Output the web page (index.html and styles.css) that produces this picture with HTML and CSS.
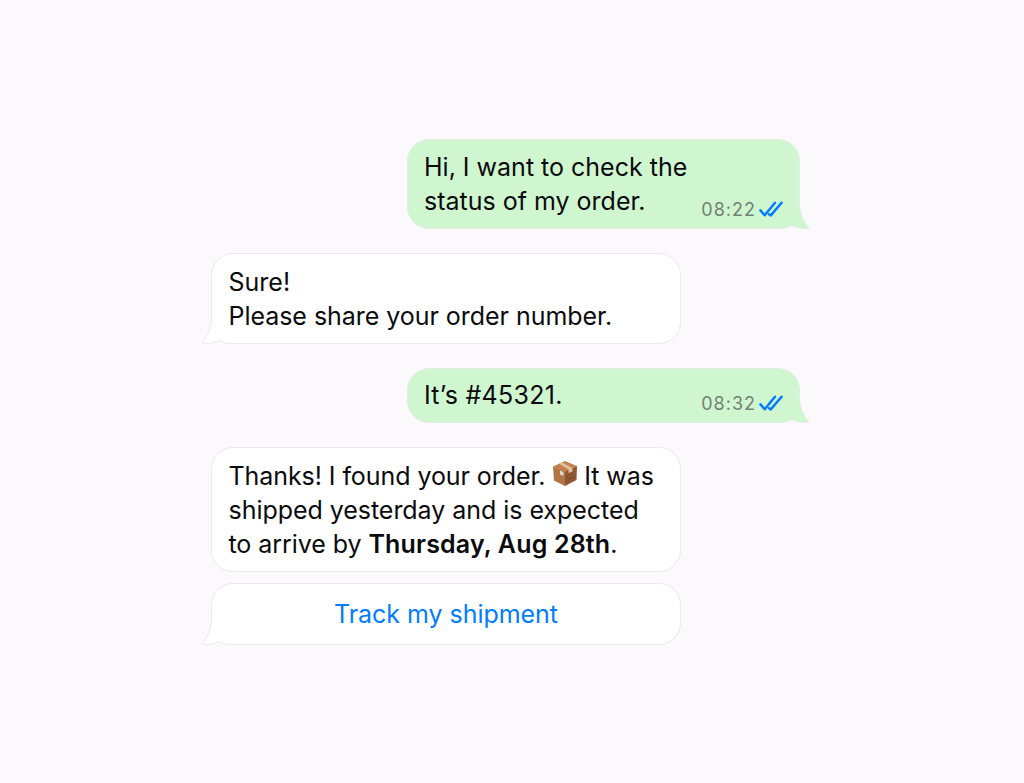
FILE: index.html
```
<!DOCTYPE html>
<html lang="en">
<head>
<meta charset="utf-8">
<title>Order chat</title>
<link rel="stylesheet" href="styles.css">
</head>
<body>
<main class="chat">
  <article class="bubble sent tall">
    <svg class="tail" viewBox="0 0 42 36"><path class="fill" d="M0 0H31.500V10C32 19 35 27 41 34C35 35 29 34 24 31.500C19 34.500 14 34.500 8 34.500H0Z"/><path class="edge" d="M31.500 0V10C32 19 35 27 41 34C35 35 29 34 24 31.500C19 34.500 14 34.500 8 34.500H0"/></svg>
    <p class="text"><span class="line">Hi, I want to check the</span><span class="line">status of my order.</span></p>
    <div class="meta"><time>08:22</time><svg class="ticks" viewBox="0 0 24 18"><path d="M1.400 9.400 5.700 14.300 16 1.700M10 13.200 11.800 14.400 22.600 1.700"/></svg></div>
  </article>
  <article class="bubble received">
    <svg class="tail" viewBox="0 0 42 36"><path class="fill" d="M0 0H31.500V10C32 19 35 27 41 34C35 35 29 34 24 31.500C19 34.500 14 34.500 8 34.500H0Z"/><path class="edge" d="M31.500 0V10C32 19 35 27 41 34C35 35 29 34 24 31.500C19 34.500 14 34.500 8 34.500H0"/></svg>
    <p class="text"><span class="line">Sure!</span><span class="line reply">Please share your order number.</span></p>
  </article>
  <article class="bubble sent short">
    <svg class="tail" viewBox="0 0 42 36"><path class="fill" d="M0 0H31.500V10C32 19 35 27 41 34C35 35 29 34 24 31.500C19 34.500 14 34.500 8 34.500H0Z"/><path class="edge" d="M31.500 0V10C32 19 35 27 41 34C35 35 29 34 24 31.500C19 34.500 14 34.500 8 34.500H0"/></svg>
    <p class="text"><span class="line number">It’s #45321.</span></p>
    <div class="meta"><time>08:32</time><svg class="ticks" viewBox="0 0 24 18"><path d="M1.400 9.400 5.700 14.300 16 1.700M10 13.200 11.800 14.400 22.600 1.700"/></svg></div>
  </article>
  <article class="bubble received details">
    <p class="text"><span class="line found">Thanks! I found your order. <svg class="parcel" viewBox="0 0 26 27" role="img" aria-label="package"><path fill="#c08350" d="M1 6.500 13 1 25 6 13 12Z"/><path fill="#b17443" d="M1 6.500 13 11.500V26L2 20.500Z"/><path fill="#8f5832" d="M13 11.500 25 6 24.500 20 13 26Z"/><path fill="#e2c09d" d="M7 3.800 10 2.400 20.500 8V11.600L16.500 13V9.500Z"/><path fill="#d9d8d7" d="m8 10.500 3.500 1.400v4L8 14.500Z"/><path fill="#6b4026" d="m17.500 18.300 1.500-.7v1.500l-1.500.7zM20.500 17l1.500-.7v1.500l-1.500.7z"/></svg> It was</span><span class="line shipped">shipped yesterday and is expected</span><span class="line arrive">to arrive by <strong>Thursday, Aug 28th</strong>.</span></p>
  </article>
  <a class="bubble received action">
    <svg class="tail" viewBox="0 0 42 36"><path class="fill" d="M0 0H31.500V10C32 19 35 27 41 34C35 35 29 34 24 31.500C19 34.500 14 34.500 8 34.500H0Z"/><path class="edge" d="M31.500 0V10C32 19 35 27 41 34C35 35 29 34 24 31.500C19 34.500 14 34.500 8 34.500H0"/></svg>
    <span class="line track">Track my shipment</span>
  </a>
</main>
</body>
</html>
```
FILE: styles.css
```
* { box-sizing: border-box; }
body {
  margin: 0;
  background: #fcf9fd;
  color: #0b0b0d;
  font: 25px/34.3px Inter, "Liberation Sans", sans-serif;
}
.chat {
  display: flex;
  flex-direction: column;
  width: 589px;
  margin-left: 211px;
  padding-top: 139px;
}
.bubble {
  position: relative;
  display: flex;
  flex: none;
  justify-content: space-between;
  border: 1px solid #ece9ee;
  border-radius: 22px;
  padding: 10px 16px;
}
.text { position: relative; margin: 0; }
.line { display: block; white-space: nowrap; }
.reply, .shipped, .track { letter-spacing: -0.04px; }
.arrive { letter-spacing: -0.06px; }
.number { letter-spacing: 0.28px; }
.found { letter-spacing: -0.07px; }
.sent {
  align-self: flex-end;
  width: 393px;
  background: #d0f6d0;
  border-color: #e0eee2;
}
.tall { height: 90px; }
.short { height: 55px; margin-bottom: 24px; padding-top: 9px; }
.received {
  width: 470px;
  height: 91px;
  background: #fff;
  margin: 24px 0;
  padding: 11px 16.5px;
}
.details { height: 125px; margin: 0 0 11px; line-height: 34px; }
.action {
  height: 62px;
  margin: 0;
  justify-content: center;
  padding-top: 13px;
  color: #007cff;
}
.action .line { position: relative; }
.meta {
  position: relative;
  display: flex;
  align-self: flex-end;
  align-items: center;
  gap: 3px;
  height: 20px;
  margin-bottom: -2px;
  color: #6f8372;
  font-size: 18px;
  line-height: 20px;
  letter-spacing: 1px;
}
.ticks { width: 24px; height: 18px; }
.ticks path {
  fill: none;
  stroke: #007cff;
  stroke-width: 2.5;
  stroke-linecap: round;
  stroke-linejoin: round;
}
.tail {
  position: absolute;
  right: -11px;
  bottom: -2px;
  width: 42px;
  height: 36px;
}
.received .tail { right: auto; left: -11px; transform: scaleX(-1); }
.tail .fill { fill: #d0f6d0; }
.tail .edge { fill: none; stroke: #e0eee2; }
.received .fill { fill: #fff; }
.received .edge { stroke: #ece9ee; }
.parcel { width: 26px; height: 27px; margin: 0 -1px 0 0; vertical-align: -2px; }
strong { font-weight: 600; letter-spacing: 0.16px; }
```
